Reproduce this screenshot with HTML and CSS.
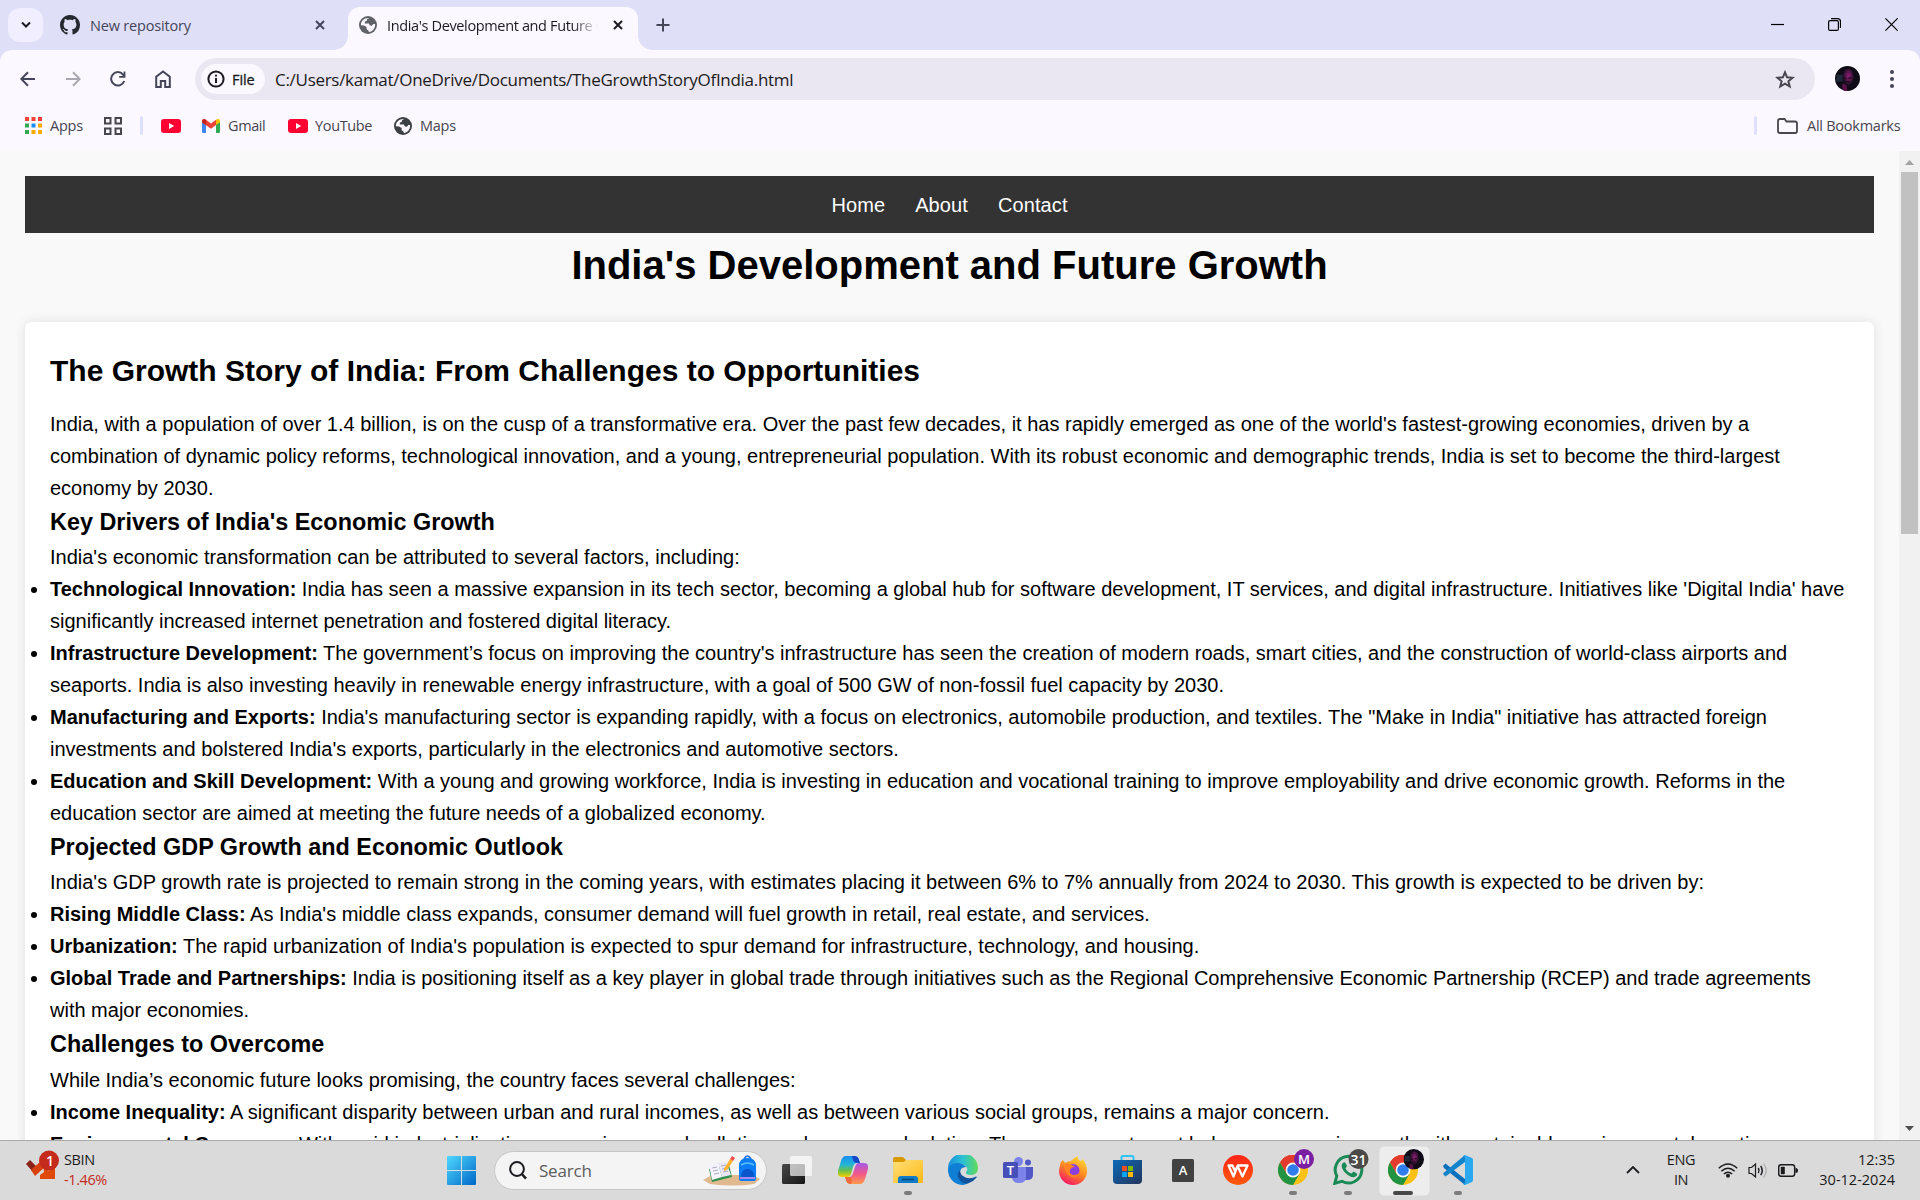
FILE: index.html
```html
<!DOCTYPE html>
<html lang="en">
<head>
<meta charset="utf-8">
<title>India's Development and Future Growth</title>
<link rel="stylesheet" href="styles.css">
</head>
<body>
<svg class="defs" width="0" height="0">
  <defs>
    <linearGradient id="gWin" x1="0" y1="0" x2="1" y2="1"><stop offset="0" stop-color="#50d8ff"/><stop offset="1" stop-color="#0067c8"/></linearGradient>
    <linearGradient id="gCopA" x1="0" y1="0" x2="0" y2="1"><stop offset="0" stop-color="#1a8df0"/><stop offset=".4" stop-color="#22b5d8"/><stop offset=".7" stop-color="#6cc04a"/><stop offset="1" stop-color="#f5d000"/></linearGradient>
    <linearGradient id="gCopB" x1="0" y1="0" x2="0" y2="1"><stop offset="0" stop-color="#a45be8"/><stop offset=".5" stop-color="#f0568c"/><stop offset="1" stop-color="#ff9a4a"/></linearGradient>
    <linearGradient id="gFold" x1="0" y1="0" x2="1" y2="1"><stop offset="0" stop-color="#ffe07a"/><stop offset="1" stop-color="#fcb814"/></linearGradient>
    <linearGradient id="gEdge" x1="0" y1="0" x2="1" y2="0"><stop offset="0" stop-color="#1a8fdc"/><stop offset=".5" stop-color="#2cc0d4"/><stop offset="1" stop-color="#62dc58"/></linearGradient>
    <linearGradient id="gStore" x1="0" y1="0" x2="1" y2="1"><stop offset="0" stop-color="#0a6ab8"/><stop offset="1" stop-color="#24345c"/></linearGradient>
    <linearGradient id="gFox" x1=".8" y1="0" x2=".3" y2="1"><stop offset="0" stop-color="#ffdf3c"/><stop offset=".5" stop-color="#ff8a1e"/><stop offset="1" stop-color="#f5156c"/></linearGradient>
    <linearGradient id="gWps" x1="0" y1="0" x2="0" y2="1"><stop offset="0" stop-color="#ff2418"/><stop offset="1" stop-color="#ff5a0c"/></linearGradient>
    <linearGradient id="gDark" x1="0" y1="0" x2="1" y2="1"><stop offset="0" stop-color="#484848"/><stop offset="1" stop-color="#161616"/></linearGradient>
    <radialGradient id="gFace" cx=".52" cy=".42" r=".5"><stop offset="0" stop-color="#8c1e70"/><stop offset=".5" stop-color="#5a1650"/><stop offset="1" stop-color="#1c0e22"/></radialGradient>
  </defs>
  <symbol id="youtube" viewBox="0 0 20 14"><rect width="20" height="14" rx="3" fill="#ff0033"/><path d="M8 4l5.2 3L8 10z" fill="#fff"/></symbol>
  <symbol id="globe" viewBox="0 0 18 18"><circle cx="9" cy="9" r="9" fill="currentColor"/><path d="M10.300 1.900L8 3.200 7.700 5 5.900 5.600 5.800 7.400l4.100.2 1 1.800 2 .4 1.400-1.800 1.800.1C16.500 12.400 13.500 15.600 10 16.100l-.8-1.800-1.600-1V10.900L5 9.500 1.900 9.200C1.700 5 5 1.600 10.300 1.900z" fill="#fbf8ff"/><path d="M10.600 1.900l3.200 1.600-1.100 2.600-1.900.4-.4 1" fill="currentColor"/></symbol>
  <symbol id="chrome" viewBox="0 0 30 30"><circle cx="15" cy="15" r="15" fill="#fbc116"/><path d="M15 15L2 7.500A15 15 0 0 1 28 7.500H15z" fill="#e33b2e"/><path d="M15 7.500H28A15 15 0 0 0 2 7.500L8.500 18.800z" fill="#e33b2e"/><path d="M2 7.500A15 15 0 0 0 15 30L21.500 18.800 8.500 18.800z" fill="#229342"/><circle cx="15" cy="15" r="7.400" fill="#fff"/><circle cx="15" cy="15" r="5.800" fill="#2f7cee"/></symbol>
  <symbol id="face" viewBox="0 0 26 26"><circle cx="13" cy="13" r="13" fill="#0e0b16"/><path d="M2 9h6v7H1z" fill="#1e2838"/><path d="M9 5q4-4 9 0l1.500 8-2 5-4 3-3.500-3-2-5z" fill="url(#gFace)"/><path d="M8 18l4 2 1 6h-3q-4-2-2-8z" fill="#571248"/><path d="M9 12.500l3 .500M14 12.500l3-.500M10.500 16q2 1 4 0" stroke="#20081c" stroke-width="1.300" fill="none"/></symbol>
</svg>

<header class="browser">
  <div class="tabstrip">
    <button class="tab-search"><svg width="12" height="8" viewBox="0 0 12 8"><path d="M2 1.500l4 4 4-4" class="ln dark w2"/></svg></button>
    <div class="tab">
      <svg width="20" height="20" viewBox="0 0 16 16"><path fill="#24292f" d="M8 0C3.580 0 0 3.580 0 8c0 3.540 2.290 6.530 5.470 7.590.4.070.55-.17.55-.38 0-.19-.01-.82-.01-1.490-2.010.37-2.530-.49-2.690-.94-.09-.23-.48-.94-.82-1.130-.28-.15-.68-.52-.01-.53.63-.01 1.080.58 1.230.82.72 1.210 1.870.87 2.330.66.07-.52.28-.87.51-1.070-1.780-.2-3.640-.89-3.640-3.950 0-.87.31-1.590.82-2.150-.08-.2-.36-1.020.08-2.120 0 0 .67-.21 2.200.82.64-.18 1.320-.27 2-.27s1.360.09 2 .27c1.530-1.040 2.200-.82 2.200-.82.44 1.100.16 1.920.08 2.120.51.56.82 1.270.82 2.150 0 3.070-1.870 3.750-3.650 3.950.29.25.54.73.54 1.480 0 1.070-.01 1.930-.01 2.200 0 .21.15.46.55.38A8.010 8.010 0 0 0 16 8c0-4.420-3.580-8-8-8z"/></svg>
      <span class="tab-title">New repository</span>
      <svg class="tab-close" width="10" height="10" viewBox="0 0 10 10"><path d="M1 1l8 8M9 1l-8 8" class="ln w2"/></svg>
    </div>
    <div class="tab active">
      <svg class="gray" width="18" height="18"><use href="#globe"/></svg>
      <span class="tab-title">India's Development and Future Growth</span>
      <svg class="tab-close" width="10" height="10" viewBox="0 0 10 10"><path d="M1 1l8 8M9 1l-8 8" class="ln dark w2"/></svg>
    </div>
    <svg class="new-tab" width="14" height="14" viewBox="0 0 14 14"><path d="M7 .500v13M.500 7h13" class="ln w2"/></svg>
    <div class="window-controls">
      <svg width="13" height="13" viewBox="0 0 13 13"><path d="M0 6.500h13" class="ln black"/></svg>
      <svg width="13" height="13" viewBox="0 0 13 13"><rect x=".600" y="2.600" width="9.800" height="9.800" rx="1.500" class="ln black"/><path d="M3 .600h6.500q3 0 3 3V10" class="ln black"/></svg>
      <svg width="13" height="13" viewBox="0 0 13 13"><path d="M.400.400l12.200 12.200M12.600.400L.400 12.600" class="ln black"/></svg>
    </div>
  </div>

  <div class="toolbar">
    <div class="nav-buttons">
      <svg width="16" height="16" viewBox="0 0 16 16"><path d="M15 8H1.500M8 1.200L1.300 8 8 14.800" class="ln w2"/></svg>
      <svg width="16" height="16" viewBox="0 0 16 16"><path d="M1 8h13.500M8 1.200L14.700 8 8 14.800" class="ln faint w2"/></svg>
      <svg width="16" height="16" viewBox="0 0 16 16"><path d="M14.200 10A6.700 6.700 0 1 1 13 3.500L14.500 5" class="ln w2"/><path d="M15.400.500v6.300H9.200V5h4.400V.500z" fill="#45455a"/></svg>
      <svg width="16" height="18" viewBox="0 0 16 18"><path d="M1.200 6.800L8 1.500l6.800 5.300V17h-4.600v-6H5.800v6H1.200z" class="ln w2"/></svg>
    </div>
    <div class="omnibox">
      <span class="chip"><svg width="18" height="18" viewBox="0 0 18 18"><circle cx="9" cy="9" r="7.600" class="ln dark w2"/><path d="M9 8v5M9 4.800v1.800" class="ln dark w2"/></svg><span>File</span></span>
      <span class="url">C:/Users/kamat/OneDrive/Documents/TheGrowthStoryOfIndia.html</span>
      <svg class="star" width="20" height="19" viewBox="0 0 20 19"><path d="M10 2.300l2.100 5 5.400.4-4.100 3.600 1.300 5.200L10 13.700l-4.700 2.800 1.300-5.200-4.100-3.600 5.400-.4z" class="ln w2 mid"/></svg>
    </div>
    <svg class="profile" width="25" height="25"><use href="#face"/></svg>
    <svg class="menu" width="4" height="18" viewBox="0 0 4 18"><g fill="#45455a"><circle cx="2" cy="2" r="2"/><circle cx="2" cy="9" r="2"/><circle cx="2" cy="16" r="2"/></g></svg>
  </div>

  <div class="bookmarks">
    <a class="bm apps"><svg width="17" height="17" viewBox="0 0 17 17"><g fill="#f44336"><path d="M0 0h4v4H0zM6.500 0h4v4h-4zM13 0h4v4h-4z"/></g><g fill="#34a853"><path d="M0 6.500h4v4H0zM0 13h4v4H0z"/></g><path d="M6.500 6.500h4v4h-4z" fill="#1a8cff"/><path d="M13 6.500h4v4h-4zM13 13h4v4h-4zM6.500 13h4v4h-4z" fill="#fbab00"/></svg><span>Apps</span></a>
    <svg class="groups" width="18" height="18" viewBox="0 0 18 18"><path d="M1 1h5.500v5.500H1zM11.500 1H17v5.500h-5.500zM1 11.500h5.500V17H1zM11.500 11.500H17V17h-5.500z" class="ln w2 mid"/></svg>
    <i class="divider"></i>
    <a class="bm yt-only"><svg width="20" height="14"><use href="#youtube"/></svg></a>
    <a class="bm gmail"><svg width="18" height="14" viewBox="0 0 18 14"><path d="M0 2v10.800Q0 14 1.200 14H4V5z" fill="#4285f4"/><path d="M18 2v10.800q0 1.200-1.200 1.200H14V5z" fill="#34a853"/><path d="M0 2.300Q0 0 2 0 3 0 4 .800L9 4.500l5-3.700V6L9 9.800 0 3.500z" fill="#ea4335"/><path d="M14 .800Q15 0 16 0q2 0 2 2.300V3.200L14 6z" fill="#fbbc04"/><path d="M0 2.300V3.200L4 6V.800Q2 -.500.600.800z" fill="#c5221f"/></svg><span>Gmail</span></a>
    <a class="bm youtube"><svg width="20" height="14"><use href="#youtube"/></svg><span>YouTube</span></a>
    <a class="bm maps"><svg width="18" height="18"><use href="#globe"/></svg><span>Maps</span></a>
    <i class="divider end"></i>
    <a class="bm all"><svg width="21" height="16" viewBox="0 0 21 16"><path d="M1 3q0-2 2-2h4.500l2 2.500H18q2 0 2 2V13q0 2-2 2H3q-2 0-2-2z" class="ln mid w17"/></svg><span>All Bookmarks</span></a>
  </div>
</header>

<div class="viewport">
  <div class="page">
    <nav class="site-nav"><a>Home</a><a>About</a><a>Contact</a></nav>
    <h1>India's Development and Future Growth</h1>
    <main class="card">
      <h2>The Growth Story of India: From Challenges to Opportunities</h2>
      <p>India, with a population of over 1.4 billion, is on the cusp of a transformative era. Over the past few decades, it has rapidly emerged as one of the world's fastest-growing economies, driven by a<br>combination of dynamic policy reforms, technological innovation, and a young, entrepreneurial population. With its robust economic and demographic trends, India is set to become the third-largest<br>economy by 2030.</p>
      <h3>Key Drivers of India's Economic Growth</h3>
      <p>India's economic transformation can be attributed to several factors, including:</p>
      <ul>
        <li><b>Technological Innovation:</b> India has seen a massive expansion in its tech sector, becoming a global hub for software development, IT services, and digital infrastructure. Initiatives like 'Digital India' have<br>significantly increased internet penetration and fostered digital literacy.</li>
        <li><b>Infrastructure Development:</b> The government’s focus on improving the country's infrastructure has seen the creation of modern roads, smart cities, and the construction of world-class airports and<br>seaports. India is also investing heavily in renewable energy infrastructure, with a goal of 500 GW of non-fossil fuel capacity by 2030.</li>
        <li><b>Manufacturing and Exports:</b> India's manufacturing sector is expanding rapidly, with a focus on electronics, automobile production, and textiles. The "Make in India" initiative has attracted foreign<br>investments and bolstered India's exports, particularly in the electronics and automotive sectors.</li>
        <li><b>Education and Skill Development:</b> With a young and growing workforce, India is investing in education and vocational training to improve employability and drive economic growth. Reforms in the<br>education sector are aimed at meeting the future needs of a globalized economy.</li>
      </ul>
      <h3>Projected GDP Growth and Economic Outlook</h3>
      <p>India's GDP growth rate is projected to remain strong in the coming years, with estimates placing it between 6% to 7% annually from 2024 to 2030. This growth is expected to be driven by:</p>
      <ul>
        <li><b>Rising Middle Class:</b> As India's middle class expands, consumer demand will fuel growth in retail, real estate, and services.</li>
        <li><b>Urbanization:</b> The rapid urbanization of India's population is expected to spur demand for infrastructure, technology, and housing.</li>
        <li><b>Global Trade and Partnerships:</b> India is positioning itself as a key player in global trade through initiatives such as the Regional Comprehensive Economic Partnership (RCEP) and trade agreements<br>with major economies.</li>
      </ul>
      <h3>Challenges to Overcome</h3>
      <p>While India’s economic future looks promising, the country faces several challenges:</p>
      <ul>
        <li><b>Income Inequality:</b> A significant disparity between urban and rural incomes, as well as between various social groups, remains a major concern.</li>
        <li><b>Environmental Concerns:</b> With rapid industrialization comes increased pollution and resource depletion. The government must balance economic growth with sustainable environmental practices.</li>
      </ul>
    </main>
  </div>
  <div class="scrollbar">
    <svg width="9" height="5" viewBox="0 0 9 5"><path d="M0 5l4.500-5L9 5z" fill="#a3a3a3"/></svg>
    <div class="thumb"></div>
    <svg width="9" height="5" viewBox="0 0 9 5"><path d="M0 0l4.500 5L9 0z" fill="#505050"/></svg>
  </div>
</div>

<footer class="taskbar">
  <div class="widget">
    <svg width="34" height="30" viewBox="0 0 34 30"><path d="M1 14l4-4 7 7-4 5z" fill="#8a2318"/><path d="M6 20l10-9 5 5-11 10z" fill="#d8400c"/><path d="M18 15l6 6 6-8v16H15v-4l4-3z" fill="#e04a08"/><circle cx="24" cy="10.500" r="10" fill="#c42b1c"/><text x="25" y="15.500" class="badge-num">1</text></svg>
    <div class="ticker"><span>SBIN</span><span class="down">-1.46%</span></div>
  </div>
  <div class="slot"><svg width="29" height="29" viewBox="0 0 29 29"><path d="M1 0h13v14H0V1q0-1 1-1zM15 0h13q1 0 1 1v13H15zM0 15h14v14H1q-1 0-1-1zM15 15h14v13q0 1-1 1H15z" fill="url(#gWin)"/></svg></div>
  <div class="search">
    <svg width="18" height="19" viewBox="0 0 18 19"><circle cx="8" cy="8" r="6.900" class="ln dark w2"/><path d="M12.800 13l4.200 4.700" class="ln dark w25"/></svg>
    <span>Search</span>
    <svg class="art" width="57" height="31" viewBox="0 0 57 31"><path d="M0 25l9-5h40l8 4-6 5q-20 3-44 0z" fill="#e0b98e"/><path d="M6 14l20-4 3 12-20 5z" fill="#2f8f4e"/><path d="M6 10l9-2 4 14-10 3z" fill="#f4f2fa"/><path d="M15 8l8-1 5 13-9 2z" fill="#e9e6f6"/><path d="M9 13l5-1M10 16l5-1M11 19l5-1M18 11l5-1M19 14l5-1M20 17l5-1" stroke="#9c9ab0" stroke-width=".800"/><path d="M21 14l6-10 3 2-6 9-3 1z" fill="#ffb22e"/><path d="M27 4l2-3 3 2-2 3z" fill="#f0504a"/><path d="M41 4q3.500-6 7 0" fill="none" stroke="#1b6fe0" stroke-width="1.600"/><path d="M36 24V11q0-8 8.500-8t8.500 8v13q0 2-2 2H38q-2 0-2-2z" fill="#0c7cf4"/><path d="M38 22q0-8 6.500-8t6.500 8z" fill="#0855cc"/><path d="M38 10q6.500-4 13 0" stroke="#5cc0ff" stroke-width="1.500" fill="none"/><path d="M37 22h15v2H37z" fill="#a58af0"/></svg>
  </div>
  <div class="slot first"><svg width="31" height="29" viewBox="0 0 31 29"><rect x="0" y="8" width="23" height="20" rx="1.500" fill="url(#gDark)"/><rect x="8" y="0" width="22" height="20" rx="1.500" fill="#fff" opacity=".68"/></svg></div>
  <div class="slot"><svg width="30" height="28" viewBox="0 0 30 28"><path d="M8 0h9q3 0 4 4l1 3h-3q-3 0-4 4l-2 7q-1 3-4 3H4q-5 0-4-6L3 5Q4.500 0 8 0z" fill="url(#gCopA)"/><path d="M16 0q4 0 5 4l1 3h-3q-3 0-4-3l-1-4z" fill="#1648c8"/><path d="M22 28h-9q-4 0-5-4l-1-3h4q3 0 4-4l2-6q1-4 4-4h5q5 0 4 6l-3 10q-1.500 5-5 5z" fill="url(#gCopB)"/><path d="M13 28q-4 0-5-4l-1-3h4q3 0 3 3z" fill="#f06a3c"/></svg></div>
  <div class="slot run"><svg width="30" height="28" viewBox="0 0 30 28"><path d="M0 3q0-2 2-2h8l3 3h14q3 0 3 3v3H0z" fill="#d99a06"/><path d="M0 6h11l2-2h16q1 0 1 1v21q0 1-1 1H1q-1 0-1-1z" fill="url(#gFold)"/><path d="M5 27v-4q0-3 3-3h14q3 0 3 3v4z" fill="#0f7cc8"/><path d="M9 23.500h12" stroke="#08467a" stroke-width="1.500"/></svg></div>
  <div class="slot"><svg width="30" height="30" viewBox="0 0 30 30"><path d="M0 14A15 15 0 0 1 30 13q0 7-7 7-6 0-5-3 2-2 1-4Q16 8 9 9 2 10 0 16z" fill="url(#gEdge)"/><path d="M0 14Q3 7 11 8q5 1 7 4-6 0-6 6 1 8 10 8-3 4-8 4A15 15 0 0 1 0 14z" fill="#0f7ed4"/><path d="M12 15q-4 4-1 9 4 6 10 4 5-2 8-6-1-1-2 0-7 3-12-1-3-2-3-6z" fill="#10529c"/></svg></div>
  <div class="slot"><svg width="30" height="27" viewBox="0 0 30 27"><circle cx="25" cy="5.500" r="3" fill="#5058c8"/><path d="M20 10h10v8q0 5-6 5h-4z" fill="#5058c8"/><circle cx="15.500" cy="4.500" r="4.500" fill="#7b83eb"/><path d="M9 10h14v10q0 6-7 6t-7-6z" fill="#7b83eb"/><rect y="5" width="15" height="16" rx="1.500" fill="#474fb8"/><text x="7.500" y="17.500" class="tile-letter light">T</text></svg></div>
  <div class="slot"><svg width="28" height="29" viewBox="0 0 28 29"><path d="M1 10q0-4 3-6l2 3q3-2 6-2 2-3 7-5-1 4 3 5l2-2q4 6 4 12a14 14 0 1 1-28 0q0-3 1-5z" fill="url(#gFox)"/><circle cx="14" cy="14.500" r="6.500" fill="#8a3ee0"/><path d="M6 8q3-1 7 1l3 2q-4 0-5 3-1 4 3 5 4 0 7-2-3 6-9 4-7-3-6-13z" fill="#ff8320"/></svg></div>
  <div class="slot"><svg width="29" height="30" viewBox="0 0 29 30"><path d="M8.500 7V2.500q0-1.500 1.500-1.500h9q1.500 0 1.500 1.500V7" fill="none" stroke="#30c4f4" stroke-width="2"/><path d="M0 5h29v20q0 4-4 4H4q-4 0-4-4z" fill="url(#gStore)"/><path d="M9 11h5v5H9z" fill="#f25022"/><path d="M15 11h5v5h-5z" fill="#7fba00"/><path d="M9 17h5v5H9z" fill="#00a4ef"/><path d="M15 17h5v5h-5z" fill="#ffb900"/></svg></div>
  <div class="slot"><svg width="22" height="23" viewBox="0 0 22 23"><rect width="22" height="23" rx="1.500" fill="#414141"/><text x="11" y="16" class="tile-letter light">A</text></svg></div>
  <div class="slot"><svg width="30" height="30" viewBox="0 0 30 30"><circle cx="15" cy="15" r="15" fill="url(#gWps)"/><path d="M14 10.500H24.500L19.500 21.500 14.500 11 10.500 21.500 5.500 10.500H9.500L12.500 17" fill="none" stroke="#fff" stroke-width="2.300" stroke-linejoin="round"/></svg></div>
  <div class="slot run"><svg width="36" height="36" viewBox="0 0 36 36"><use href="#chrome" x="0" y="6" width="30" height="30"/><circle cx="26" cy="10" r="10" fill="#7b1fa2"/><text x="26" y="15" class="tile-letter light">M</text></svg></div>
  <div class="slot run"><svg width="36" height="36" viewBox="0 0 36 36"><path d="M1.800 34.300l2-7.300A13.300 13.300 0 1 1 9 32.300z" fill="none" stroke="#1a8a56" stroke-width="3"/><path d="M9 15q2-3 3.500-1l1.500 3-1.500 2.500q2 4 6 5l2-2 3.500 2q1 2-2.500 3.500-4 1-9-4-5-5-3.500-9z" fill="#1a8a56"/><circle cx="25.500" cy="10" r="10" fill="#4c4a48"/><text x="25.500" y="15.500" class="badge-num">31</text></svg></div>
  <div class="slot run current"><svg width="36" height="36" viewBox="0 0 36 36"><use href="#chrome" x="0" y="6" width="30" height="30"/><use href="#face" x="15.500" y="0" width="20.500" height="20.500"/></svg></div>
  <div class="slot run"><svg width="30" height="30" viewBox="0 0 30 30"><path d="M0 11l2.500-2.500L22 24v6L1 13z" fill="#0a70bc"/><path d="M0 19l2.500 2.500L22 7V0L1 17.500z" fill="#1284cc"/><path d="M22 0l7 3q1 .500 1 2v20q0 1.500-1 2l-7 3-2-1q2 0 2-2V3q0-2-2-2z" fill="#2aa8f0"/></svg></div>
  <div class="tray">
    <svg class="caret" width="14" height="8" viewBox="0 0 14 8"><path d="M1 7l6-6 6 6" class="ln dark w17"/></svg>
    <div class="lang"><span>ENG</span><span>IN</span></div>
    <svg class="wifi" width="20" height="15" viewBox="0 0 20 15"><path d="M.800 5.300Q10-3.300 19.200 5.300M3.300 8.200q6.700-6 13.400 0M5.900 11q4.100-3.600 8.200 0" class="ln dark w15"/><circle cx="10" cy="12.700" r="2" fill="#1a1a1a"/></svg>
    <svg class="vol" width="20" height="17" viewBox="0 0 20 17"><path d="M1 5.500h2.500L7.500 2v13L3.500 11.500H1z" class="ln dark w12"/><path d="M10.300 6q1.500 2.500 0 5M12.700 3.800q3 4.700 0 9.400" class="ln dark w15"/><path d="M15.500 1.500q5.500 7 0 14" class="ln pale w12"/></svg>
    <svg class="bat" width="20" height="13" viewBox="0 0 20 13"><rect x=".700" y=".700" width="16" height="11.600" rx="2.500" class="ln dark w15"/><rect x="2.800" y="2.800" width="4" height="7.400" rx=".800" fill="#1a1a1a"/><path d="M17.500 4q2.500 0 2.500 2.500T17.500 9z" fill="#1a1a1a"/></svg>
    <div class="clock"><span>12:35</span><span>30-12-2024</span></div>
  </div>
</footer>
</body>
</html>
```
FILE: styles.css
```css
* { box-sizing: border-box; }
body {
  margin: 0; width: 1920px; height: 1200px; overflow: hidden;
  display: flex; flex-direction: column;
  font-family: "Open Sans", "Noto Sans", sans-serif; font-size: 14.5px;
  background: #e0dff8; color: #1c1b20;
}
svg { display: block; flex: none; }
.defs { position: absolute; }
.ln { fill: none; stroke: #45455a; stroke-width: 1.2; }
.dark { stroke: #1c1b20; }
.black { stroke: #000; }
.mid { stroke: #47464f; }
.faint { stroke: #a9a8b2; }
.pale { stroke: #aaa; }
.w12 { stroke-width: 1.2; }
.w15 { stroke-width: 1.5; }
.w17 { stroke-width: 1.8; }
.w2 { stroke-width: 2; }
.w25 { stroke-width: 2.5; }

/* Tab strip */
.tabstrip { height: 50px; display: flex; padding-left: 8px; }
.tab-search {
  width: 35px; height: 34px; margin: 8px 0 0; padding: 0; border: 0; border-radius: 12px;
  background: #f0eeff; display: flex; align-items: center; justify-content: center;
}
.tab { display: flex; align-items: center; height: 50px; width: 305px; padding: 0 23px 0 17px; }
.tab-title { margin-left: 10px; flex: 1; white-space: nowrap; overflow: hidden; color: #45455a; letter-spacing: -.18px; line-height: 24px; padding-top: 1px; }
.tab.active {
  width: 290px; height: 43px; margin-top: 7px; padding: 0 15px 7px 11px; position: relative;
  background: #fbf8ff; border-radius: 12px 12px 0 0;
}
.tab.active::before, .tab.active::after { content: ""; position: absolute; bottom: 0; width: 14px; height: 14px; }
.tab.active::before { left: -14px; background: radial-gradient(circle at 0 0, transparent 13.5px, #fbf8ff 14px); }
.tab.active::after { right: -14px; background: radial-gradient(circle at 100% 0, transparent 13.5px, #fbf8ff 14px); }
.tab.active .tab-title {
  color: #1c1b20; margin-left: 10px; margin-right: 15px; letter-spacing: -.36px;
  -webkit-mask-image: linear-gradient(90deg, #000 88%, transparent);
  mask-image: linear-gradient(90deg, #000 88%, transparent);
}
.gray { color: #5f6368; }
.new-tab { margin: 18px 0 0 18px; }
.window-controls { margin: 18px 22px 0 auto; display: flex; gap: 44px; }

/* Toolbar */
.toolbar { height: 54px; display: flex; align-items: center; background: #fbf8ff; border-radius: 12px 12px 0 0; padding: 4px 26px 0 20px; }
.nav-buttons { display: flex; align-items: center; gap: 29px; width: 175px; padding-bottom: 1px; }
.omnibox { width: 1620px; height: 42px; border-radius: 21px; background: #eae7f2; display: flex; align-items: center; padding: 0 20px 0 6px; }
.chip { width: 64px; height: 30px; border-radius: 15px; background: #fbf8ff; display: flex; align-items: center; gap: 7px; padding-left: 6px; font-size: 14.5px; font-weight: 500; letter-spacing: -.1px; -webkit-text-stroke: .3px #1c1b20; }
.url { margin-left: 10px; font-size: 17px; letter-spacing: -.29px; white-space: nowrap; }
.star { margin-left: auto; }
.profile { margin: 0 0 1px 20px; }
.menu { margin-left: auto; }

/* Bookmarks bar */
.bookmarks { height: 47px; display: flex; align-items: center; background: #fbf8ff; padding: 0 17px 4px 25px; color: #47464f; font-size: 14.5px; letter-spacing: -.25px; }
.bm { display: flex; align-items: center; white-space: nowrap; }
.apps { gap: 8px; width: 79px; }
.groups { margin-right: 18px; }
.divider { width: 3px; height: 19px; border-radius: 2px; background: #dfe0ff; }
.yt-only { padding-left: 18px; width: 59px; }
.gmail { gap: 8px; width: 86px; letter-spacing: -.4px; }
.youtube { gap: 7px; width: 106px; letter-spacing: -.35px; }
.maps { gap: 8px; }
.maps svg { color: #3c4043; }
.divider.end { margin-left: auto; margin-right: 20px; }
.all { gap: 9px; width: 126px; }

/* Web page */
.viewport { height: 989px; display: flex; overflow: hidden; background: #f9f9f9; }
.page { width: 1899px; padding: 25px; font-family: Arial, "Liberation Sans", sans-serif; font-size: 20px; line-height: 32px; color: #000; white-space: nowrap; }
.site-nav { height: 57px; background: #333; color: #fff; display: flex; justify-content: center; align-items: center; gap: 30px; letter-spacing: .1px; }
h1, h2, h3, p, ul { margin: 0; padding: 0; }
h1 { font-size: 40px; line-height: 64px; text-align: center; margin-bottom: 25px; }
.card { height: 900px; padding: 25px; background: #fff; border-radius: 6px; box-shadow: 0 0 12px rgba(0, 0, 0, .1); }
h2 { font-size: 30px; line-height: 48px; margin-bottom: 12.5px; }
h3 { font-size: 23.4px; line-height: 37.44px; }
.scrollbar { width: 21px; background: #f1f1f1; display: flex; flex-direction: column; align-items: center; padding: 9px 0; }
.thumb { width: 17px; height: 362px; margin: 7px 0 auto; background: #c1c1c1; }

/* Taskbar */
.taskbar { height: 60px; background: #dadada; border-top: 1px solid #a9a9a9; display: flex; align-items: center; color: #1c1c1c; padding-bottom: 1px; }
.widget { width: 434px; padding-left: 25px; display: flex; gap: 5px; align-items: center; }
.widget svg { margin-top: -11px; }
.ticker, .lang, .clock { display: flex; flex-direction: column; line-height: 20px; font-size: 14.5px; letter-spacing: -.4px; }
.down { color: #c42b1c; }
.slot { width: 55px; height: 58px; display: flex; align-items: center; justify-content: center; position: relative; }
.slot.first { margin-left: 3px; }
.slot svg { position: relative; }
.slot svg[width="36"] { margin: -6px -6px 0 0; }
.run::after { content: ""; position: absolute; left: 24px; bottom: 4px; width: 8px; height: 4px; border-radius: 2px; background: #7c7c7c; }
.current::before { content: ""; position: absolute; left: 4px; top: 5px; width: 49px; height: 48px; border-radius: 5px; background: #ededed; border: 1px solid #e3e3e3; }
.current::after { left: 18px; width: 20px; background: #484848; }
.search { width: 273px; height: 39px; margin-left: 5px; border-radius: 20px; background: #f4f4f4; border: 1px solid #c6c6c6; display: flex; align-items: center; padding: 0 6px 0 14px; font-size: 17px; letter-spacing: -.2px; color: #5c5c5c; }
.search span { margin-left: 12px; }
.art { margin-left: auto; }
.badge-num, .tile-letter { fill: #fff; text-anchor: middle; font: 600 14px "Open Sans", sans-serif; }
.light { font-size: 13px; }
.tray { margin-left: auto; display: flex; align-items: center; padding-right: 25px; }
.caret { margin-right: 27px; }
.lang { width: 28px; align-items: center; margin-right: 23px; }
.wifi { margin-right: 10px; }
.vol { margin-right: 10px; }
.bat { margin-right: 21px; }
.clock { width: 76px; align-items: flex-end; letter-spacing: 0; }
```
